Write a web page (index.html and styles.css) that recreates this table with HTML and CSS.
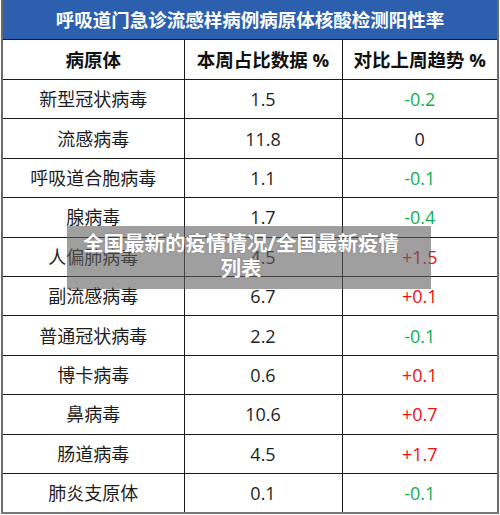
FILE: index.html
```html
<!DOCTYPE html>
<html lang="zh">
<head>
<meta charset="utf-8">
<link rel="stylesheet" href="styles.css">
</head>
<body>
<div class="page">
  <table class="grid">
    <colgroup>
      <col class="c1"><col class="c2"><col class="c3">
    </colgroup>
    <tr class="title"><td colspan="3">呼吸道门急诊流感样病例病原体核酸检测阳性率</td></tr>
    <tr class="head"><td>病原体</td><td>本周占比数据 %</td><td>对比上周趋势 %</td></tr>
    <tr><td>新型冠状病毒</td><td>1.5</td><td class="down">-0.2</td></tr>
    <tr><td>流感病毒</td><td>11.8</td><td>0</td></tr>
    <tr><td>呼吸道合胞病毒</td><td>1.1</td><td class="down">-0.1</td></tr>
    <tr><td>腺病毒</td><td>1.7</td><td class="down">-0.4</td></tr>
    <tr><td>人偏肺病毒</td><td>4.5</td><td class="up">+1.5</td></tr>
    <tr><td>副流感病毒</td><td>6.7</td><td class="up">+0.1</td></tr>
    <tr><td>普通冠状病毒</td><td>2.2</td><td class="down">-0.1</td></tr>
    <tr><td>博卡病毒</td><td>0.6</td><td class="up">+0.1</td></tr>
    <tr><td>鼻病毒</td><td>10.6</td><td class="up">+0.7</td></tr>
    <tr><td>肠道病毒</td><td>4.5</td><td class="up">+1.7</td></tr>
    <tr><td>肺炎支原体</td><td>0.1</td><td class="down">-0.1</td></tr>
  </table>
  <div class="overlay">全国最新的疫情情况/全国最新疫情<br>列表</div>
</div>
</body>
</html>
```
FILE: styles.css
```css
html, body {
  margin: 0;
  padding: 0;
  background: #fff;
}
.page {
  position: relative;
  width: 500px;
  height: 515px;
  padding-left: 1px;
  box-sizing: border-box;
  font-family: "Open Sans", "Noto Sans CJK SC", sans-serif;
}
.grid {
  border-collapse: collapse;
  table-layout: fixed;
  width: 498px;
  border-left: 2px solid #6a6a6a;
  border-right: 2px solid #6a6a6a;
  border-bottom: 2px solid #777;
}
.c1 { width: 182px; }
.c2 { width: 158px; }
.grid td {
  border: 1px solid #1a1a1a;
  text-align: center;
  vertical-align: middle;
  padding: 0;
  height: 38.4px;
  font-size: 18px;
  color: #1e1e1e;
  line-height: 20px;
}
.grid .title td {
  height: 39px;
  background: #2c5fad;
  color: #fff;
  font-weight: bold;
  font-size: 18.5px;
  border-top: none;
  border-left: 2px solid #6a6a6a;
  border-right: 2px solid #6a6a6a;
}
.grid .head td {
  height: 39px;
  font-weight: bold;
  font-size: 18.5px;
  color: #111;
}
.grid td.down { color: #0fb04f; }
.grid td.up { color: #f01010; }
.overlay {
  position: absolute;
  left: 67px;
  top: 226px;
  width: 364px;
  height: 63px;
  box-sizing: border-box;
  padding: 5px 20px 0 4px;
  background: rgba(95, 95, 95, 0.6);
  color: #fff;
  font-weight: bold;
  font-size: 20.5px;
  line-height: 25px;
  text-align: center;
  white-space: nowrap;
  text-shadow: 0 0 2px rgba(0,0,0,0.25);
}
```
